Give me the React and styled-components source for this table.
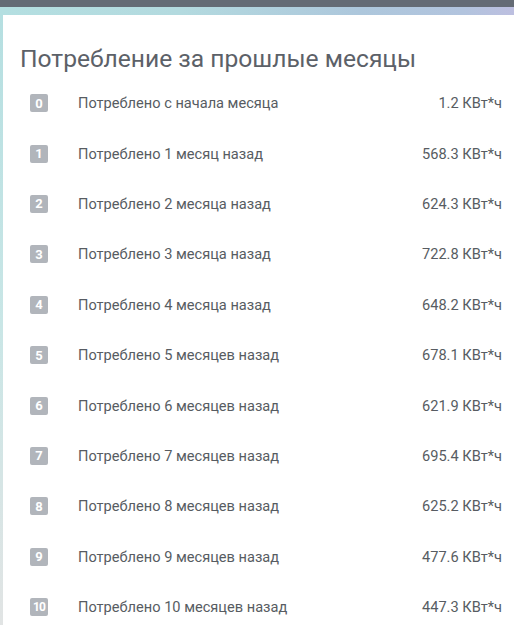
import React from "react";
import styled, { createGlobalStyle } from "styled-components";

const Global = createGlobalStyle`
  html, body { margin: 0; padding: 0; background: #ffffff; }
  body { font-family: Roboto, "Noto Sans", "Liberation Sans", sans-serif; }
`;

const Page = styled.div`
  width: 514px;
  height: 625px;
  overflow: hidden;
  display: flex;
  flex-direction: column;
  background: #ffffff;
`;

const TopBar = styled.div`
  height: 7px;
  background: #646b75;
  flex: none;
`;

const Strip = styled.div`
  height: 8px;
  flex: none;
  background: linear-gradient(90deg, #b4dfe1 0%, #b3dadf 35%, #adc7dc 70%, #b2c4de 90%, #bdbfe0 100%);
`;

const Card = styled.div`
  flex: 1;
  display: flex;
  flex-direction: column;
  padding: 30px 12px 0 17px;
  border-left: 3px solid transparent;
  border-image: linear-gradient(180deg, #b5dfe1 0%, #c9e6e6 50%, #e2e4e4 100%) 1;
`;

const Title = styled.h1`
  margin: 0 0 5px 0;
  font-size: 24.6px;
  font-weight: 400;
  line-height: 28px;
  color: #5c6168;
`;

const List = styled.div`
  display: flex;
  flex-direction: column;
  padding-left: 10px;
`;

const Row = styled.div`
  height: 50.4px;
  display: flex;
  align-items: center;
  font-size: 14.6px;
  color: #575c62;
`;

const Badge = styled.span`
  width: 18px;
  height: 18px;
  flex: none;
  border-radius: 2px;
  background: #b1b5bb;
  color: #ffffff;
  font-family: Roboto, "Liberation Sans", sans-serif;
  font-weight: 700;
  font-size: ${(p) => (p.$wide ? "12px" : "13px")};
  letter-spacing: ${(p) => (p.$wide ? "-0.8px" : "0")};
  line-height: 1;
  display: flex;
  align-items: center;
  justify-content: center;
  margin-right: 30px;
`;

const Label = styled.span`
  flex: 1;
`;

const Value = styled.span`
  flex: none;
  text-align: right;
`;

const rows = [
  ["Потреблено с начала месяца", "1.2"],
  ["Потреблено 1 месяц назад", "568.3"],
  ["Потреблено 2 месяца назад", "624.3"],
  ["Потреблено 3 месяца назад", "722.8"],
  ["Потреблено 4 месяца назад", "648.2"],
  ["Потреблено 5 месяцев назад", "678.1"],
  ["Потреблено 6 месяцев назад", "621.9"],
  ["Потреблено 7 месяцев назад", "695.4"],
  ["Потреблено 8 месяцев назад", "625.2"],
  ["Потреблено 9 месяцев назад", "477.6"],
  ["Потреблено 10 месяцев назад", "447.3"],
];

export default function App() {
  return (
    <Page>
      <Global />
      <TopBar />
      <Strip />
      <Card>
        <Title>Потребление за прошлые месяцы</Title>
        <List>
          {rows.map(([label, value], i) => (
            <Row key={i}>
              <Badge $wide={i >= 10}>{i}</Badge>
              <Label>{label}</Label>
              <Value>{value} КВт*ч</Value>
            </Row>
          ))}
        </List>
      </Card>
    </Page>
  );
}
